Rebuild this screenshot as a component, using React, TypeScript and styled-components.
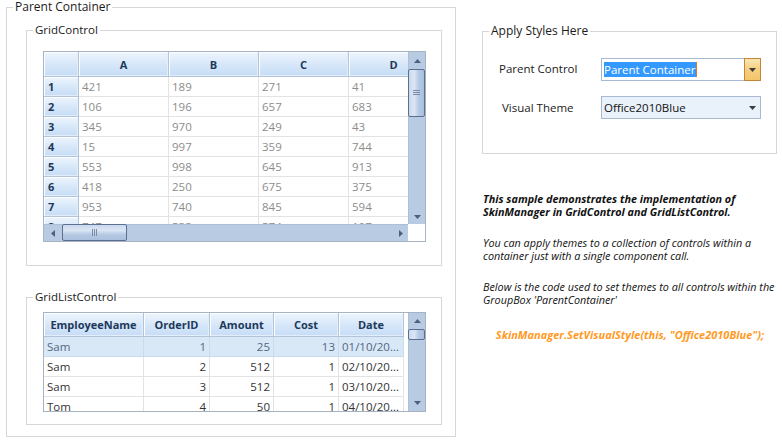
import styled, { createGlobalStyle } from 'styled-components';

const GlobalStyle = createGlobalStyle`
  html, body {
    margin: 0;
    padding: 0;
    background: #fff;
  }
  body {
    font-family: 'Open Sans', 'Noto Sans', sans-serif;
    font-size: 11.5px;
    color: #1b1b1b;
  }
  * {
    box-sizing: border-box;
  }
`;

const Page = styled.div`
  display: flex;
  align-items: flex-start;
  gap: 26px;
  padding-left: 6px;
  width: 782px;
  height: 443px;
  overflow: hidden;
`;

const Group = styled.fieldset<{ $w: number; $h: number; $mt?: number }>`
  margin: ${(p) => p.$mt ?? 0}px 0 0 0;
  padding: 0;
  min-width: 0;
  width: ${(p) => p.$w}px;
  height: ${(p) => p.$h}px;
  border: 1px solid #d7d7d7;
`;

const Legend = styled.legend<{ $size?: number }>`
  margin-left: 6px;
  padding: 0 2px;
  font-size: ${(p) => p.$size ?? 11.5}px;
  line-height: 14px;
  color: #1b1b1b;
`;

const GroupBody = styled.div<{ $pt: number; $pl: number }>`
  display: flex;
  flex-direction: column;
  padding: ${(p) => p.$pt}px 0 0 ${(p) => p.$pl}px;
`;

/* ---------- grid ---------- */

const GridFrame = styled.div<{ $h: number; $hscroll?: boolean }>`
  width: 383px;
  height: ${(p) => p.$h}px;
  border: 1px solid #a5b3c5;
  background: #fff;
  display: grid;
  grid-template-columns: 1fr 17px;
  grid-template-rows: ${(p) => (p.$hscroll ? '1fr 17px' : '1fr')};
`;

const Viewport = styled.div`
  overflow: hidden;
  min-width: 0;
  min-height: 0;
`;

const Row = styled.div<{ $h: number; $sel?: boolean }>`
  display: flex;
  width: max-content;
  height: ${(p) => p.$h}px;
  background: ${(p) => (p.$sel ? '#d8e8f7' : '#fff')};
`;

const HeadCell = styled.div<{ $w: number; $align?: string }>`
  flex: none;
  width: ${(p) => p.$w}px;
  height: 100%;
  display: flex;
  align-items: center;
  justify-content: ${(p) => p.$align ?? 'center'};
  padding: 0 4px;
  background: linear-gradient(#eef5fd, #d5e6f9 55%, #c6ddf6);
  border-right: 1px solid #b3c4d9;
  border-bottom: 1px solid #b3c4d9;
  box-shadow: inset 1px 1px 0 #fbfdff, inset -1px -1px 0 #e4eefa;
  font-size: 11px;
  font-weight: 700;
  color: #20385a;
  white-space: nowrap;
`;

const DataCell = styled.div<{ $w: number; $align?: string; $color?: string; $sel?: boolean }>`
  flex: none;
  width: ${(p) => p.$w}px;
  height: 100%;
  display: flex;
  align-items: center;
  justify-content: ${(p) => p.$align ?? 'flex-start'};
  padding: 0 3px;
  border-right: 1px solid ${(p) => (p.$sel ? '#c9dcee' : '#e3e3e3')};
  border-bottom: 1px solid ${(p) => (p.$sel ? '#c9dcee' : '#e3e3e3')};
  color: ${(p) => p.$color ?? '#8c8c8c'};
  white-space: nowrap;
  overflow: hidden;
`;

/* ---------- scrollbars ---------- */

const VScroll = styled.div`
  display: flex;
  flex-direction: column;
  align-items: stretch;
  background: #b8cbe3;
  border-left: 1px solid #aabfd8;
`;

const HScroll = styled.div`
  display: flex;
  align-items: stretch;
  background: #b8cbe3;
  border-top: 1px solid #aabfd8;
`;

const Corner = styled.div`
  background: #fff;
`;

const ArrowBtn = styled.div<{ $size: number; $vertical?: boolean }>`
  flex: none;
  ${(p) => (p.$vertical ? `height: ${p.$size}px;` : `width: ${p.$size}px;`)}
  display: flex;
  align-items: center;
  justify-content: center;
`;

const Fill = styled.div`
  flex: 1;
`;

const VThumb = styled.div<{ $h: number }>`
  flex: none;
  height: ${(p) => p.$h}px;
  margin: 0 0 0 -1px;
  border: 1px solid #5d6e93;
  border-radius: 2px;
  background: linear-gradient(to right, #c9d9ed, #dbe6f3 35%, #b4c9e3 65%, #a9c0dd);
  display: flex;
  align-items: center;
  justify-content: center;
`;

const HThumb = styled.div<{ $w: number }>`
  flex: none;
  width: ${(p) => p.$w}px;
  margin-top: -1px;
  border: 1px solid #5d6e93;
  border-radius: 2px;
  background: linear-gradient(#c9d9ed, #dbe6f3 35%, #b4c9e3 65%, #a9c0dd);
  display: flex;
  align-items: center;
  justify-content: center;
`;

const Grip = styled.div<{ $vertical?: boolean }>`
  width: ${(p) => (p.$vertical ? 7 : 6)}px;
  height: ${(p) => (p.$vertical ? 6 : 7)}px;
  background: ${(p) =>
    p.$vertical
      ? 'repeating-linear-gradient(#7b8cab 0 1px, transparent 1px 2px)'
      : 'repeating-linear-gradient(to right, #7b8cab 0 1px, transparent 1px 2px)'};
`;

type Dir = 'up' | 'down' | 'left' | 'right';

function Arrow({ dir, color = '#4d5f80' }: { dir: Dir; color?: string }) {
  const pts: Record<Dir, string> = {
    up: '0,4 7,4 3.5,0',
    down: '0,0 7,0 3.5,4',
    left: '4,0 4,7 0,3.5',
    right: '0,0 0,7 4,3.5',
  };
  const vertical = dir === 'up' || dir === 'down';
  return (
    <svg width={vertical ? 7 : 4} height={vertical ? 4 : 7} viewBox={vertical ? '0 0 7 4' : '0 0 4 7'}>
      <polygon points={pts[dir]} fill={color} />
    </svg>
  );
}

/* ---------- right panel ---------- */

const FieldRow = styled.div<{ $mt?: number }>`
  display: flex;
  align-items: center;
  margin-top: ${(p) => p.$mt ?? 0}px;
`;

const FieldLabel = styled.div<{ $indent?: number; $dy?: number }>`
  width: 102px;
  padding-left: ${(p) => p.$indent ?? 0}px;
  position: relative;
  top: ${(p) => p.$dy ?? 0}px;
  color: #1b1b1b;
`;

const Combo = styled.div<{ $active?: boolean }>`
  width: 160px;
  height: 23px;
  display: flex;
  align-items: center;
  padding-left: 2px;
  border: 1px solid #a9b9d1;
  background: ${(p) => (p.$active ? '#fff' : '#e9f1fb')};
  color: #111;
`;

const ComboText = styled.div`
  flex: 1;
  display: flex;
  align-items: center;
  white-space: nowrap;
`;

const Selection = styled.span`
  background: #3399ff;
  color: #fff;
  line-height: 15px;
  padding: 0 1px 0 0;
  border-right: 1px solid #e0761f;
`;

const DropButton = styled.div<{ $hot?: boolean }>`
  width: 17px;
  align-self: stretch;
  margin: -1px -1px -1px 0;
  display: flex;
  align-items: center;
  justify-content: center;
  border: 1px solid ${(p) => (p.$hot ? '#c4873a' : 'transparent')};
  background: ${(p) => (p.$hot ? 'linear-gradient(#fbe7b2, #f6cf7f 50%, #f3c46a)' : 'transparent')};
`;

const Notes = styled.div`
  margin-top: 38px;
  padding-left: 1px;
  font-size: 10.8px;
  line-height: 13px;
  font-style: italic;
  color: #111;
`;

const Note = styled.p<{ $bold?: boolean; $mt?: number }>`
  margin: ${(p) => p.$mt ?? 0}px 0 0 0;
  font-weight: ${(p) => (p.$bold ? 700 : 400)};
  white-space: nowrap;
`;

const Code = styled.p`
  margin: 22px 0 0 0;
  text-align: center;
  font-size: 11px;
  line-height: 14px;
  font-weight: 700;
  color: #ff9a1f;
  white-space: nowrap;
`;

const gridRows = [
  ['421', '189', '271', '41'],
  ['106', '196', '657', '683'],
  ['345', '970', '249', '43'],
  ['15', '997', '359', '744'],
  ['553', '998', '645', '913'],
  ['418', '250', '675', '375'],
  ['953', '740', '845', '594'],
  ['747', '533', '574', '107'],
];

const listCols = [
  { name: 'EmployeeName', w: 100 },
  { name: 'OrderID', w: 66 },
  { name: 'Amount', w: 64 },
  { name: 'Cost', w: 65 },
  { name: 'Date', w: 65 },
];

const listRows = [
  ['Sam', '1', '25', '13', '01/10/20...'],
  ['Sam', '2', '512', '1', '02/10/20...'],
  ['Sam', '3', '512', '1', '03/10/20...'],
  ['Tom', '4', '50', '1', '04/10/20...'],
];

export default function App() {
  return (
    <>
      <GlobalStyle />
      <Page>
        <Group $w={450} $h={437}>
          <Legend $size={12}>Parent Container</Legend>
          <GroupBody $pt={9} $pl={19}>
            <Group $w={416} $h={243}>
              <Legend>GridControl</Legend>
              <GroupBody $pt={14} $pl={16}>
                <GridFrame $h={191} $hscroll>
                  <Viewport>
                    <Row $h={25}>
                      <HeadCell $w={35} />
                      {['A', 'B', 'C', 'D'].map((c) => (
                        <HeadCell key={c} $w={90}>
                          {c}
                        </HeadCell>
                      ))}
                    </Row>
                    {gridRows.map((r, i) => (
                      <Row key={i} $h={20}>
                        <HeadCell $w={35} $align="flex-start">
                          {i + 1}
                        </HeadCell>
                        {r.map((v, j) => (
                          <DataCell key={j} $w={90}>
                            {v}
                          </DataCell>
                        ))}
                      </Row>
                    ))}
                  </Viewport>
                  <VScroll>
                    <ArrowBtn $vertical $size={17}>
                      <Arrow dir="up" />
                    </ArrowBtn>
                    <VThumb $h={48}>
                      <Grip $vertical />
                    </VThumb>
                    <Fill />
                    <ArrowBtn $vertical $size={15}>
                      <Arrow dir="down" />
                    </ArrowBtn>
                  </VScroll>
                  <HScroll>
                    <ArrowBtn $size={18}>
                      <Arrow dir="left" />
                    </ArrowBtn>
                    <HThumb $w={65}>
                      <Grip />
                    </HThumb>
                    <Fill />
                    <ArrowBtn $size={15}>
                      <Arrow dir="right" />
                    </ArrowBtn>
                  </HScroll>
                  <Corner />
                </GridFrame>
              </GroupBody>
            </Group>

            <Group $w={416} $h={135} $mt={24}>
              <Legend>GridListControl</Legend>
              <GroupBody $pt={8} $pl={16}>
                <GridFrame $h={100}>
                  <Viewport>
                    <Row $h={24}>
                      {listCols.map((c) => (
                        <HeadCell key={c.name} $w={c.w}>
                          {c.name}
                        </HeadCell>
                      ))}
                    </Row>
                    {listRows.map((r, i) => (
                      <Row key={i} $h={20} $sel={i === 0}>
                        {r.map((v, j) => (
                          <DataCell
                            key={j}
                            $w={listCols[j].w}
                            $sel={i === 0}
                            $align={j >= 1 && j <= 3 ? 'flex-end' : 'flex-start'}
                            $color={i === 0 ? '#52667f' : '#333'}
                          >
                            {v}
                          </DataCell>
                        ))}
                      </Row>
                    ))}
                  </Viewport>
                  <VScroll>
                    <ArrowBtn $vertical $size={16}>
                      <Arrow dir="up" />
                    </ArrowBtn>
                    <VThumb $h={11} />
                    <Fill />
                    <ArrowBtn $vertical $size={16}>
                      <Arrow dir="down" />
                    </ArrowBtn>
                  </VScroll>
                </GridFrame>
              </GroupBody>
            </Group>
          </GroupBody>
        </Group>

        <div>
          <Group $w={295} $h={130} $mt={24}>
            <Legend $size={12}>Apply Styles Here</Legend>
            <GroupBody $pt={20} $pl={16}>
              <FieldRow>
                <FieldLabel $dy={-1}>Parent Control</FieldLabel>
                <Combo $active>
                  <ComboText>
                    <Selection>Parent Container</Selection>
                  </ComboText>
                  <DropButton $hot>
                    <Arrow dir="down" color="#3b3b3b" />
                  </DropButton>
                </Combo>
              </FieldRow>
              <FieldRow $mt={15}>
                <FieldLabel $indent={3}>Visual Theme</FieldLabel>
                <Combo>
                  <ComboText>Office2010Blue</ComboText>
                  <DropButton>
                    <Arrow dir="down" color="#3b3b3b" />
                  </DropButton>
                </Combo>
              </FieldRow>
            </GroupBody>
          </Group>

          <Notes>
            <Note $bold>
              This sample demonstrates the implementation of
              <br />
              SkinManager in GridControl and GridListControl.
            </Note>
            <Note $mt={18}>
              You can apply themes to a collection of controls within a
              <br />
              container just with a single component call.
            </Note>
            <Note $mt={18}>
              Below is the code used to set themes to all controls within the
              <br />
              GroupBox 'ParentContainer'
            </Note>
            <Code>SkinManager.SetVisualStyle(this, "Office2010Blue");</Code>
          </Notes>
        </div>
      </Page>
    </>
  );
}
